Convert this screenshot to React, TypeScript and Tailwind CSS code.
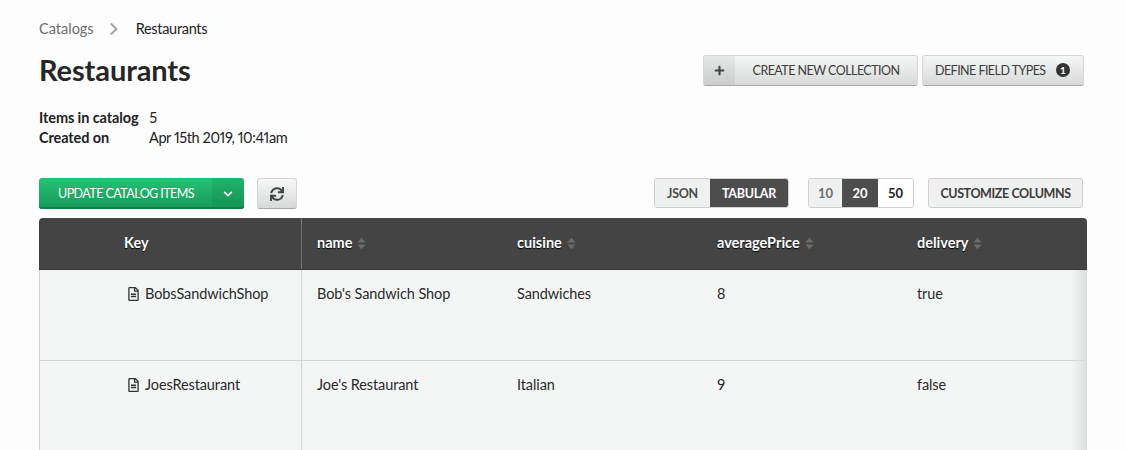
import { FaChevronDown, FaChevronRight, FaPlus, FaRegFileAlt, FaSync } from "react-icons/fa";

const font = { fontFamily: "Lato, 'Open Sans', sans-serif" };

const columns = ["name", "cuisine", "averagePrice", "delivery"];

const rows = [
  { key: "BobsSandwichShop", values: ["Bob's Sandwich Shop", "Sandwiches", "8", "true"] },
  { key: "JoesRestaurant", values: ["Joe's Restaurant", "Italian", "9", "false"] },
];

const SortIcon = () => (
  <svg width="9" height="13" viewBox="0 0 9 13" className="ml-[5px] mt-px">
    <path d="M4.5 0.5 L8.5 5.5 H0.5 Z" fill="#6a6a6a" />
    <path d="M4.5 12.5 L8.5 7.5 H0.5 Z" fill="#6a6a6a" />
  </svg>
);

const App = () => {
  return (
    <div style={font} className="h-[450px] overflow-hidden bg-[#fdfdfd] pl-[39px] pr-[38px] text-[#222]">
      <div className="flex h-[55px] items-start pt-[19px] text-[14.5px] leading-[20px]">
        <span className="text-[#6d6d6d]">Catalogs</span>
        <FaChevronRight className="ml-[15px] mr-[17px] mt-[3px] h-[14px] w-[10px] text-[#a8a8a8]" />
        <span className="tracking-[-0.3px]">Restaurants</span>
      </div>

      <div className="flex h-[30px] items-center justify-between pr-[3px]">
        <h1 className="text-[29px] font-bold leading-[36px] tracking-[-0.1px] text-[#262626]">Restaurants</h1>
        <div className="flex gap-[4px]">
          <button className="flex h-[31px] w-[215px] overflow-hidden rounded-[3px] border border-[#d6d6d6] border-b-[#a9a9a9] bg-gradient-to-b from-[#f6f7f7] to-[#d8d9d9] text-[12.5px] tracking-[-0.55px] text-[#3c3c3c]">
            <span className="flex h-full w-[31px] items-center justify-center bg-gradient-to-b from-[#e6e7e7] to-[#cbcccc]">
              <FaPlus className="h-[11px] w-[11px] text-[#444]" />
            </span>
            <span className="flex h-full flex-1 items-center justify-center whitespace-nowrap pt-[2px]">CREATE NEW COLLECTION</span>
          </button>
          <button className="flex h-[31px] w-[162px] items-center gap-[10px] whitespace-nowrap rounded-[3px] border border-[#d6d6d6] border-b-[#a9a9a9] bg-gradient-to-b from-[#f6f7f7] to-[#d8d9d9] pl-[12px] text-[12.5px] tracking-[-0.55px] text-[#3c3c3c]">
            <span className="pt-[2px]">DEFINE FIELD TYPES</span>
            <span className="flex h-[14px] w-[14px] items-center justify-center rounded-full bg-[#333] text-[10px] font-bold text-white">1</span>
          </button>
        </div>
      </div>

      <div className="mt-[23px] grid grid-cols-[110px_1fr] text-[14.5px] leading-[20px]">
        <span className="font-bold tracking-[-0.1px] text-[#222]">Items in catalog</span>
        <span>5</span>
        <span className="font-bold tracking-[-0.1px] text-[#222]">Created on</span>
        <span className="tracking-[-0.4px] [font-variant-numeric:proportional-nums]">Apr 15th 2019, 10:41am</span>
      </div>

      <div className="mt-[30px] flex h-[31px] items-start pr-[4px]">
        <div className="flex h-[31px] w-[205px] overflow-hidden rounded-[3px] bg-gradient-to-b from-[#25c274] to-[#18995a] text-white shadow-[inset_0_-2px_0_#12804a]">
          <span className="flex flex-1 items-center whitespace-nowrap pl-[19px] pt-[2px] text-[12.5px] tracking-[-0.55px]">UPDATE CATALOG ITEMS</span>
          <span className="flex w-[32px] items-center justify-center bg-[#0f7f47]/20">
            <FaChevronDown className="h-[10px] w-[10px]" />
          </span>
        </div>
        <button className="ml-[13px] flex h-[31px] w-[40px] items-center justify-center rounded-[3px] border border-[#d6d6d6] border-b-[#a9a9a9] bg-gradient-to-b from-[#f6f7f7] to-[#d8d9d9]">
          <FaSync className="h-[14px] w-[14px] text-[#444]" />
        </button>

        <div className="ml-auto flex h-[30px] overflow-hidden rounded-[3px] border border-[#cfcfcf] text-[12.5px] font-bold tracking-[-0.3px]">
          <span className="flex w-[55px] items-center justify-center bg-[#eff0f0] pt-[2px] text-[#4a4a4a]">JSON</span>
          <span className="flex w-[78px] items-center justify-center bg-[#4d4d4d] pt-[2px] text-white">TABULAR</span>
        </div>
        <div className="ml-[19px] flex h-[30px] overflow-hidden rounded-[3px] border border-[#cfcfcf] text-[13px] font-bold">
          <span className="flex w-[33px] items-center justify-center bg-[#eff0f0] pt-[2px] text-[#6d6d6d]">10</span>
          <span className="flex w-[36px] items-center justify-center bg-[#4d4d4d] pt-[2px] text-white">20</span>
          <span className="flex w-[35px] items-center justify-center bg-white pt-[2px] text-[#222]">50</span>
        </div>
        <button className="ml-[14px] flex h-[30px] w-[155px] items-center justify-center whitespace-nowrap rounded-[3px] border border-[#cfcfcf] bg-[#eff0f0] pt-[2px] text-[12.5px] font-bold tracking-[-0.4px] text-[#3c3c3c]">
          CUSTOMIZE COLUMNS
        </button>
      </div>

      <div className="relative mt-[9px] w-[1048px]">
        <div className="grid h-[52px] grid-cols-[263px_200px_200px_200px_1fr] rounded-t-[4px] border-b border-[#333] bg-[#444] text-[14.5px] font-bold text-white">
          <div className="flex items-center border-r border-[#777] pb-[2px] pl-[85px] [text-shadow:0_1px_1px_#000]">Key</div>
          {columns.map((c) => (
            <div key={c} className="flex items-center pb-[2px] pl-[15px] [text-shadow:0_1px_1px_#000]">
              {c}
              <SortIcon />
            </div>
          ))}
        </div>
        {rows.map((r) => (
          <div key={r.key} className="grid h-[91px] grid-cols-[262px_200px_200px_200px_1fr] border-b border-l border-[#d3d5d5] bg-[#f4f6f6] text-[14.5px] text-[#2a2a2a]">
            <div className="flex items-start gap-[6px] border-r border-[#d3d5d5] pl-[88px] pt-[14px] leading-[20px] tracking-[-0.1px]">
              <FaRegFileAlt className="mt-[3px] h-[14px] w-[11px] text-[#333]" />
              {r.key}
            </div>
            {r.values.map((v, i) => (
              <div key={i} className="pl-[15px] pt-[14px] leading-[20px] tracking-[-0.1px]">{v}</div>
            ))}
          </div>
        ))}
        <div className="absolute bottom-0 right-0 top-[52px] w-[16px] bg-gradient-to-r from-transparent to-[#dcdddd]" />
      </div>
    </div>
  );
};

export default App;
